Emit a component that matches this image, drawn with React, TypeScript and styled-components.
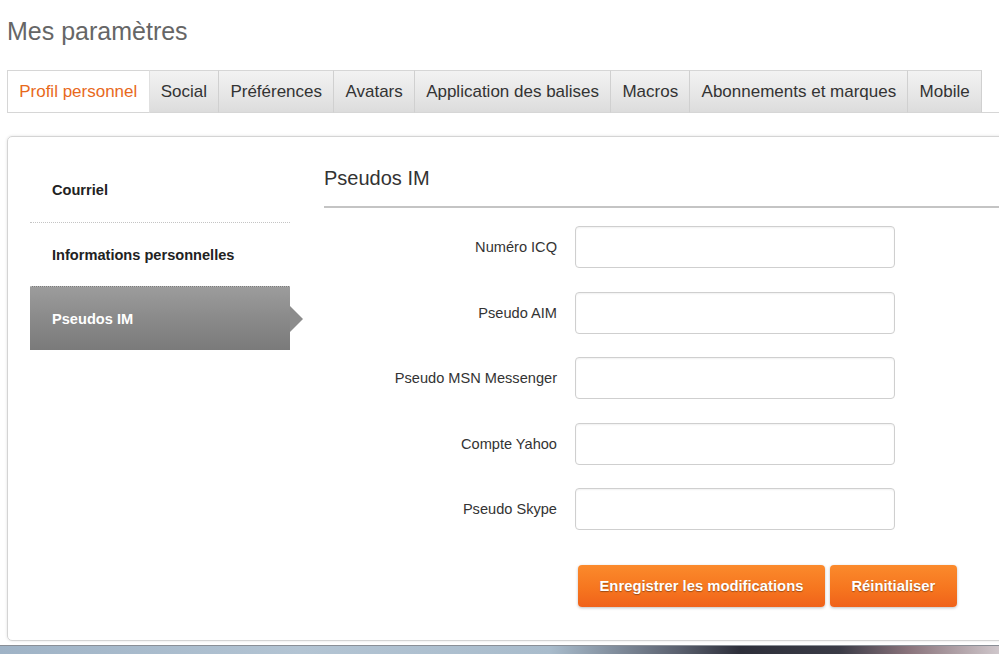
import React from 'react'
import styled, { createGlobalStyle } from 'styled-components'

const GlobalStyle = createGlobalStyle`
  html, body {
    margin: 0;
    padding: 0;
    background: #fff;
    font-family: "Liberation Sans", Arial, sans-serif;
  }
  body {
    overflow: hidden;
  }
`

const Page = styled.div`
  width: 999px;
  height: 654px;
  overflow: hidden;
  display: flex;
  flex-direction: column;
`

const Content = styled.div`
  padding-left: 7px;
  display: flex;
  flex-direction: column;
`

const Title = styled.h1`
  margin: 15px 0 0;
  font-size: 25px;
  line-height: 32px;
  font-weight: normal;
  color: #666;
`

const TabStrip = styled.div`
  display: flex;
  margin-top: 23px;
  height: 43px;
  border-bottom: 1px solid #d6d6d6;
  box-sizing: border-box;
`

const Tab = styled.div<{ $active?: boolean }>`
  display: flex;
  align-items: center;
  padding: 0 11.2px;
  font-size: 17px;
  color: ${({ $active }) => ($active ? '#e8691c' : '#333')};
  background: ${({ $active }) =>
    $active ? '#fff' : 'linear-gradient(to bottom, #f2f2f2 0%, #e6e6e6 60%, #dcdcdc 100%)'};
  border: 1px solid #d6d6d6;
  border-left: ${({ $active }) => ($active ? '1px solid #d6d6d6' : 'none')};
  border-right-color: ${({ $active }) => ($active ? '#e0e0e0' : '#d0d0d0')};
  height: 43px;
  box-sizing: border-box;
  white-space: nowrap;
`

const Panel = styled.div`
  margin-top: 23px;
  width: 1010px;
  border: 1px solid #d4d4d4;
  border-radius: 5px;
  box-shadow: 0 0 3px rgba(0, 0, 0, 0.12);
  display: flex;
  padding: 21px 0 33px 22px;
  box-sizing: border-box;
`

const Sidebar = styled.div`
  width: 260px;
  flex-shrink: 0;
  display: flex;
  flex-direction: column;
`

const SideItem = styled.div<{ $active?: boolean; $first?: boolean }>`
  position: relative;
  height: 64px;
  display: flex;
  align-items: center;
  padding-left: 22px;
  font-size: 14.6px;
  font-weight: bold;
  color: ${({ $active }) => ($active ? '#fff' : '#222')};
  border-top: ${({ $first, $active }) =>
    $first ? 'none' : $active ? '1px dotted #b8b8b8' : '1px dotted #c4c4c4'};
  background: ${({ $active }) =>
    $active ? 'linear-gradient(to bottom, #9c9c9c 0%, #8a8a8a 50%, #7a7a7a 100%)' : 'transparent'};
  box-sizing: border-box;

  ${({ $active }) =>
    $active &&
    `
    &::after {
      content: '';
      position: absolute;
      right: -13px;
      top: 19px;
      border-top: 13px solid transparent;
      border-bottom: 13px solid transparent;
      border-left: 13px solid #8c8c8c;
    }
  `}
`

const Main = styled.div`
  margin-left: 34px;
  flex: 1;
  display: flex;
  flex-direction: column;
`

const Heading = styled.h2`
  margin: 0;
  font-size: 20px;
  font-weight: normal;
  color: #333;
  height: 48px;
  line-height: 40px;
  border-bottom: 2px solid #c4c4c4;
  box-sizing: content-box;
`

const Form = styled.div`
  display: flex;
  flex-direction: column;
  gap: 23.5px;
  margin-top: 18px;
`

const Row = styled.div`
  display: flex;
  align-items: center;
`

const Label = styled.label`
  width: 233px;
  text-align: right;
  font-size: 14.6px;
  color: #333;
  margin-right: 18px;
`

const Input = styled.input`
  width: 320px;
  height: 42px;
  box-sizing: border-box;
  border: 1px solid #cfcfcf;
  border-radius: 4px;
  box-shadow: inset 0 1px 2px rgba(0, 0, 0, 0.06);
  font-family: inherit;
  font-size: 14px;
  padding: 0 10px;
  outline: none;
`

const Actions = styled.div`
  display: flex;
  gap: 5px;
  margin-top: 35px;
  margin-left: 254px;
`

const Button = styled.button`
  height: 42px;
  padding: 0 21.5px;
  border: none;
  border-radius: 4px;
  font-family: "Liberation Sans", Arial, sans-serif;
  font-size: 14.8px;
  font-weight: bold;
  color: #fff;
  text-shadow: 0 1px 1px rgba(0, 0, 0, 0.35);
  background: linear-gradient(to bottom, #fb8a2c 0%, #f6761f 55%, #f0621a 100%);
  box-shadow: 0 1px 3px rgba(0, 0, 0, 0.25);
  cursor: pointer;
`

const Taskbar = styled.div`
  margin-top: 4px;
  height: 10px;
  border-top: 1px solid #8a8f96;
  background: linear-gradient(
    to right,
    #9fb3c6 0%,
    #b3c4d3 30%,
    #a9bccc 55%,
    #5a606e 68%,
    #2d2f3a 74%,
    #3a3b46 84%,
    #8a747c 91%,
    #cfc7cb 100%
  );
`

const tabs = [
  'Profil personnel',
  'Social',
  'Préférences',
  'Avatars',
  'Application des balises',
  'Macros',
  'Abonnements et marques',
  'Mobile',
]

const fields = ['Numéro ICQ', 'Pseudo AIM', 'Pseudo MSN Messenger', 'Compte Yahoo', 'Pseudo Skype']

export default function App() {
  return (
    <Page>
      <GlobalStyle />
      <Content>
        <Title>Mes paramètres</Title>
        <TabStrip>
          {tabs.map((t, i) => (
            <Tab key={t} $active={i === 0}>
              {t}
            </Tab>
          ))}
        </TabStrip>
        <Panel>
          <Sidebar>
            <SideItem $first>Courriel</SideItem>
            <SideItem>Informations personnelles</SideItem>
            <SideItem $active>Pseudos IM</SideItem>
          </Sidebar>
          <Main>
            <Heading>Pseudos IM</Heading>
            <Form>
              {fields.map((f) => (
                <Row key={f}>
                  <Label>{f}</Label>
                  <Input type="text" />
                </Row>
              ))}
            </Form>
            <Actions>
              <Button>Enregistrer les modifications</Button>
              <Button>Réinitialiser</Button>
            </Actions>
          </Main>
        </Panel>
      </Content>
      <Taskbar />
    </Page>
  )
}
